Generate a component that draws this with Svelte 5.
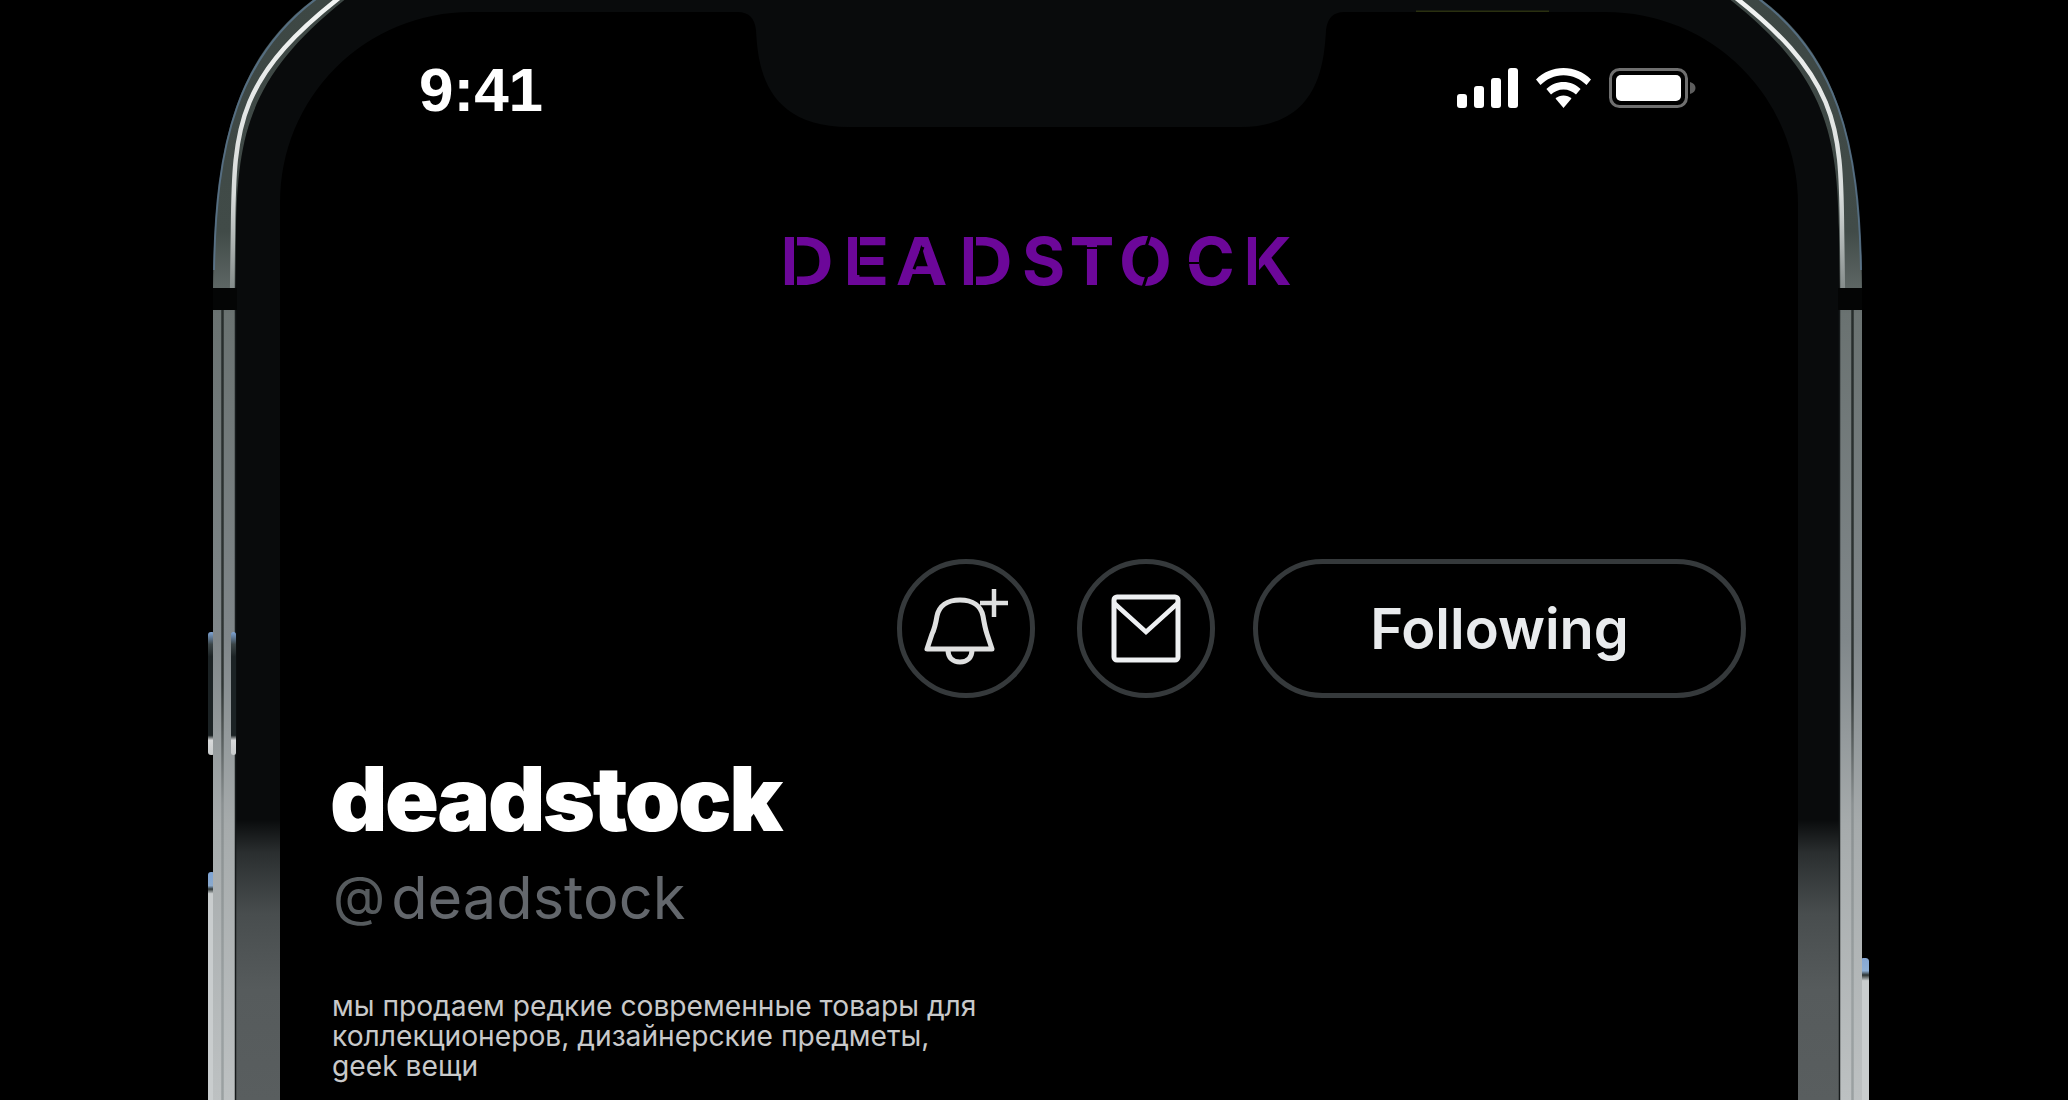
<script>
  // Each letter: left edge, box width, horizontal stretch, and stencil cuts laid over it (logo coordinates).
  const letters = [
    { c: 'D', x: 783, w: 45, sx: 1.13, cuts: [{ x: 793.5, y: 235, w: 3, h: 52 }] },
    { c: 'E', x: 846, w: 37, sx: 1.16, cuts: [{ x: 856.5, y: 235, w: 3, h: 40 }] },
    { c: 'A', x: 896, w: 51, sx: 1.05, cuts: [{ x: 917, y: 246, w: 2.5, h: 24, r: 22 }] },
    { c: 'D', x: 962, w: 45, sx: 1.13, cuts: [{ x: 972.8, y: 235, w: 3, h: 52 }] },
    { c: 'S', x: 1022, w: 37, sx: 1, cuts: [] },
    { c: 'T', x: 1070, w: 40, sx: 1.02, cuts: [{ x: 1068, y: 246.5, w: 44, h: 2.2 }] },
    { c: 'O', x: 1120, w: 51, sx: 1.04, cuts: [{ x: 1146, y: 234, w: 3, h: 17, r: 18 }, { x: 1144, y: 271, w: 3, h: 18, r: 18 }] },
    { c: 'C', x: 1186, w: 42, sx: 1, cuts: [{ x: 1184, y: 262, w: 15, h: 1.8 }] },
    { c: 'K', x: 1244, w: 43, sx: 1.02, cuts: [{ x: 1256, y: 235, w: 2.8, h: 52 }] }
  ];
  const top = 237;
</script>

<div class="page">
  <svg class="frame" width="2068" height="1100" viewBox="0 0 2068 1100" aria-hidden="true">
    <defs>
      <linearGradient id="bezel" gradientUnits="userSpaceOnUse" x1="0" y1="0" x2="0" y2="1100">
        <stop offset="0" stop-color="#090b0c" />
        <stop offset="0.745" stop-color="#090b0c" />
        <stop offset="0.775" stop-color="#2a2e2f" />
        <stop offset="0.83" stop-color="#484d4e" />
        <stop offset="0.9" stop-color="#565b5c" />
        <stop offset="1" stop-color="#595e5f" />
      </linearGradient>
      <linearGradient id="metal" gradientUnits="userSpaceOnUse" x1="0" y1="0" x2="0" y2="1100">
        <stop offset="0" stop-color="#3d4744" />
        <stop offset="0.21" stop-color="#414b48" />
        <stop offset="0.285" stop-color="#6a7271" />
        <stop offset="0.58" stop-color="#80878a" />
        <stop offset="0.75" stop-color="#a6abac" />
        <stop offset="1" stop-color="#bdc1c2" />
      </linearGradient>
      <linearGradient id="shine" gradientUnits="userSpaceOnUse" x1="0" y1="0" x2="0" y2="300">
        <stop offset="0" stop-color="#f2f4f3" />
        <stop offset="0.65" stop-color="#d8dcdb" />
        <stop offset="1" stop-color="#7a8281" />
      </linearGradient>
      <linearGradient id="groove" gradientUnits="userSpaceOnUse" x1="0" y1="300" x2="0" y2="1000">
        <stop offset="0" stop-color="#262c2b" />
        <stop offset="0.55" stop-color="#2f3534" />
        <stop offset="0.72" stop-color="#8a9091" />
        <stop offset="1" stop-color="#9aa0a1" />
      </linearGradient>
      <linearGradient id="btn" gradientUnits="userSpaceOnUse" x1="0" y1="632" x2="0" y2="755">
        <stop offset="0" stop-color="#7fa5d6" />
        <stop offset="0.1" stop-color="#3a4446" />
        <stop offset="0.2" stop-color="#1b2224" />
        <stop offset="0.84" stop-color="#1b2224" />
        <stop offset="0.88" stop-color="#d8dadb" />
        <stop offset="1" stop-color="#c8cbcc" />
      </linearGradient>
      <linearGradient id="btn2" gradientUnits="userSpaceOnUse" x1="0" y1="872" x2="0" y2="1100">
        <stop offset="0" stop-color="#7fa5d6" />
        <stop offset="0.06" stop-color="#8aa9cc" />
        <stop offset="0.075" stop-color="#2f3737" />
        <stop offset="0.095" stop-color="#c9cdce" />
        <stop offset="1" stop-color="#c9cdce" />
      </linearGradient>
      <linearGradient id="btn3" gradientUnits="userSpaceOnUse" x1="0" y1="958" x2="0" y2="1100">
        <stop offset="0" stop-color="#86a7d3" />
        <stop offset="0.09" stop-color="#8fb0d6" />
        <stop offset="0.12" stop-color="#2c3332" />
        <stop offset="0.16" stop-color="#c9cdce" />
        <stop offset="1" stop-color="#c9cdce" />
      </linearGradient>
      <g id="rim">
        <path fill="url(#metal)" d="M213 1150V300C213 150 232 50 330 -12H360C250 70 238 130 236 230L235 300V1150Z" />
        <path fill="none" stroke="#5d7b96" stroke-width="2" opacity="0.75" d="M214 270C216 150 234 50 332 -12" />
        <path fill="none" stroke="url(#shine)" stroke-width="4.500" d="M232 300L233 230C234 125 236 75 352 -12" />
        <path fill="none" stroke="url(#groove)" stroke-width="2.500" d="M222.500 310V1150" />
        <path fill="none" stroke="#161a1b" stroke-width="1.500" d="M235.500 300V1150" />
        <rect x="213" y="288" width="24" height="22" fill="#040505" />
      </g>
    </defs>

    <path fill="url(#bezel)" fill-rule="evenodd"
      d="M235 1150V300L236 230C238 130 250 70 360 -12H1715C1825 70 1837 130 1839 230L1840 300V1150Z
         M280 1150V202A190 190 0 0 1 470 12H738Q754 12 756 30C758 62 762 127 850 127H1240C1320 127 1324 62 1326 30Q1328 12 1344 12H1606A192 192 0 0 1 1798 204V1150Z" />

    <rect x="208" y="632" width="7" height="123" rx="3" fill="url(#btn)" />
    <rect x="208" y="872" width="7" height="240" rx="3" fill="url(#btn2)" />
    <rect x="1860" y="958" width="9" height="160" rx="3.500" fill="url(#btn3)" />

    <use href="#rim" />
    <use href="#rim" transform="matrix(-1 0 0 1 2075 0)" />

    <rect x="231" y="632" width="5" height="123" rx="2.500" fill="url(#btn)" />

    <rect x="1416" y="10.500" width="133" height="1.500" fill="#2a3010" />
  </svg>

  <main class="screen">
    <header class="status">
      <span class="time">9:41</span>
      <div class="indicators">
        <svg width="61" height="40" viewBox="0 0 61 40" aria-hidden="true">
          <rect x="0" y="26" width="10" height="14" rx="3" fill="#fff" />
          <rect x="17" y="18" width="10" height="22" rx="3" fill="#fff" />
          <rect x="34" y="10" width="10" height="30" rx="3" fill="#fff" />
          <rect x="51" y="0" width="10" height="40" rx="3" fill="#fff" />
        </svg>
        <svg width="55" height="40" viewBox="0 0 55 40" aria-hidden="true">
          <path fill="#fff" d="M27.500 0C38 0 47.500 4 55 11.500L50.500 17C44.500 11 36.500 7.200 27.500 7.200S10.500 11 4.500 17L0 11.500C7.500 4 17 0 27.500 0Z" />
          <path fill="#fff" d="M27.500 14C34 14 40 16.600 44.600 21L40 26.400C36.800 23.400 32.400 21.400 27.500 21.400S18.200 23.400 15 26.400L10.400 21C15 16.600 21 14 27.500 14Z" />
          <path fill="#fff" d="M27.500 27.400C30.600 27.400 33.400 28.600 35.500 30.600L27.500 40L19.500 30.600C21.600 28.600 24.400 27.400 27.500 27.400Z" />
        </svg>
        <svg width="87" height="40" viewBox="0 0 87 40" aria-hidden="true">
          <rect x="1.500" y="1.500" width="76" height="37" rx="9" fill="none" stroke="#6f6f6f" stroke-width="3" />
          <rect x="7" y="7" width="65" height="26" rx="5" fill="#fff" />
          <path d="M81 14C84.500 15 86.500 17 86.500 20S84.500 25 81 26Z" fill="#5e5e5e" />
        </svg>
      </div>
    </header>

    <div class="logo" aria-label="DEADSTOCK">
      {#each letters as l, i}
        <span class="letter" style="width:{l.w}px;margin-left:{i === 0 ? 0 : l.x - letters[i - 1].x - letters[i - 1].w}px">
          <b class="glyph" style="transform:scaleX({l.sx})">{l.c}</b>
          {#each l.cuts as k}
            <i class="cut" style="left:{k.x - l.x}px;top:{k.y - top}px;width:{k.w}px;height:{k.h}px;transform:rotate({k.r ?? 0}deg)"></i>
          {/each}
        </span>
      {/each}
    </div>

    <div class="actions">
      <button class="round" aria-label="Notify">
        <svg width="90" height="90" viewBox="0 0 90 90" fill="none" stroke="#dfe0e0" aria-hidden="true">
          <path stroke-width="5" stroke-linejoin="round" d="M6 65H71L66 50C64 44 63 38 62 32C60 22 52 16 39 16C26 16 18 22 16 32C15 38 14 44 11 50Z" />
          <path stroke-width="5" d="M27 66C27 74 32 78 39 78S51 74 51 66" />
          <path stroke-width="4.500" d="M73 5V33M59 19H87" />
        </svg>
      </button>
      <button class="round mail" aria-label="Message">
        <svg width="74" height="72" viewBox="0 0 74 72" fill="none" stroke="#eef0f2" aria-hidden="true">
          <rect x="5" y="4" width="64" height="63" rx="3" stroke-width="5" />
          <path stroke-width="4.500" d="M5 10L37 39L69 10" />
        </svg>
      </button>
      <button class="pill">Following</button>
    </div>

    <section class="profile">
      <h1>deadstock</h1>
      <p class="handle"><span class="at">@</span>deadstock</p>
      <p class="bio">мы продаем редкие современные товары для<br />коллекционеров, дизайнерские предметы,<br />geek вещи</p>
    </section>
  </main>
</div>

<style>
  :global(body) {
    margin: 0;
    background: #000;
  }
  .page {
    position: relative;
    width: 2068px;
    height: 1100px;
    overflow: hidden;
    background: #000;
    font-family: Inter, "Noto Sans", sans-serif;
  }
  .frame {
    position: absolute;
    inset: 0;
  }
  .screen {
    position: relative;
    margin-left: 280px;
    width: 1518px;
    display: flex;
    flex-direction: column;
  }
  .status {
    display: flex;
    justify-content: space-between;
    align-items: flex-start;
    padding: 60px 102px 0 139px;
    height: 61px;
  }
  .time {
    font-family: "Liberation Sans", Arial, sans-serif;
    font-weight: 700;
    font-size: 62px;
    line-height: 60px;
    color: #fff;
  }
  .indicators {
    display: flex;
    gap: 18px;
    padding-top: 8px;
  }
  .logo {
    display: flex;
    margin: 116px 0 0 503px;
    height: 48px;
    color: #6c0799;
    font-size: 66px;
    line-height: 48px;
  }
  .letter {
    position: relative;
    display: block;
    text-align: center;
    flex: none;
  }
  .glyph {
    display: block;
    font-weight: 700;
  }
  .cut {
    position: absolute;
    background: #000;
  }
  .actions {
    display: flex;
    justify-content: flex-end;
    align-items: center;
    margin-top: 274px;
    padding-right: 52px;
    gap: 38px;
  }
  .round,
  .pill {
    box-sizing: border-box;
    height: 139px;
    border: 5px solid #35393b;
    border-radius: 70px;
    background: transparent;
    padding: 0;
    display: flex;
    align-items: center;
    justify-content: center;
    color: #e9ebed;
    font-family: inherit;
  }
  .round {
    width: 138px;
  }
  .round + .round {
    margin-left: 4px;
  }
  .pill {
    width: 493px;
    font-weight: 600;
    font-size: 56px;
  }
  .profile {
    padding-left: 50px;
    margin-top: 51px;
  }
  h1 {
    margin: 0;
    font-size: 89px;
    line-height: 100px;
    font-weight: 900;
    color: #fff;
    letter-spacing: -2.500px;
  }
  .handle {
    margin: 0;
    padding: 12px 0 0 3px;
    font-size: 59.500px;
    line-height: 72px;
    font-weight: 400;
    color: #63676c;
  }
  .at {
    margin-right: 6px;
    font-size: 54px;
    position: relative;
    top: -4px;
    color: #565b5e;
  }
  .bio {
    margin: 55px 0 0 2px;
    font-size: 28.200px;
    line-height: 30px;
    color: #c8c9ca;
  }
</style>
